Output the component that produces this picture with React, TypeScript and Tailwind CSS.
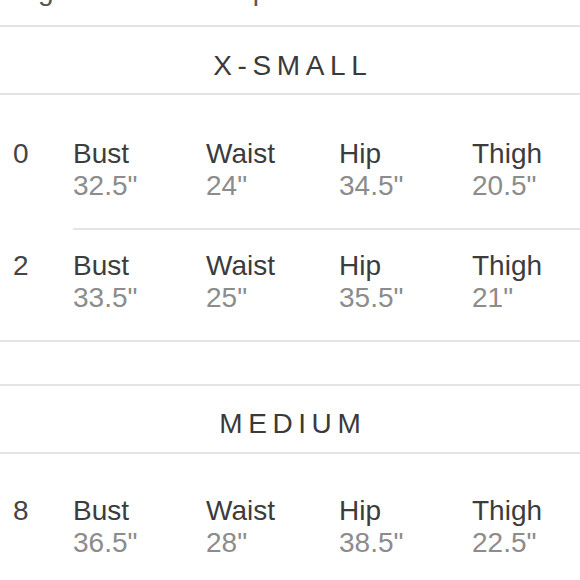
import React from 'react';

interface Measure {
  label: string
  value: string
}

interface SizeRow {
  size: string
  measures: Measure[]
}

const Divider: React.FC<{ indent?: boolean }> = ({ indent = false }) => (
  <div className={indent ? 'pl-[73px]' : ''}>
    <div className="h-[2px] bg-[#e4e4e4]" />
  </div>
);

const SectionTitle: React.FC<{ title: string; className?: string }> = ({ title, className = '' }) => (
  <div className={`text-center text-[28px] leading-[31px] tracking-[0.2em] text-[#3a3a3a] pl-[0.2em] ${className}`}>
    {title}
  </div>
);

const Row: React.FC<{ row: SizeRow; className?: string }> = ({ row, className = '' }) => (
  <div className={`grid grid-cols-[60px_133px_133px_133px_1fr] pl-[13px] text-[28px] leading-[31px] ${className}`}>
    <div className="text-[#444]">{row.size}</div>
    {row.measures.map((m) => (
      <div key={m.label}>
        <div className="text-[#3c3c3c]">{m.label}</div>
        <div className="text-[#8c8c8c] mt-[1px]">{m.value}</div>
      </div>
    ))}
  </div>
);

const rows: Record<string, SizeRow> = {
  '0': {
    size: '0',
    measures: [
      { label: 'Bust', value: '32.5"' },
      { label: 'Waist', value: '24"' },
      { label: 'Hip', value: '34.5"' },
      { label: 'Thigh', value: '20.5"' },
    ],
  },
  '2': {
    size: '2',
    measures: [
      { label: 'Bust', value: '33.5"' },
      { label: 'Waist', value: '25"' },
      { label: 'Hip', value: '35.5"' },
      { label: 'Thigh', value: '21"' },
    ],
  },
  '8': {
    size: '8',
    measures: [
      { label: 'Bust', value: '36.5"' },
      { label: 'Waist', value: '28"' },
      { label: 'Hip', value: '38.5"' },
      { label: 'Thigh', value: '22.5"' },
    ],
  },
};

export default function App() {
  return (
    <div
      className="w-[580px] h-[580px] overflow-hidden bg-white"
      style={{ fontFamily: '"Liberation Sans", Arial, sans-serif' }}
    >
      {/* previous line of the chart, scrolled mostly out of view */}
      <div className="h-[25px] overflow-hidden">
        <div className="mt-[-25px] pl-[13px] text-[28px] leading-[31px] text-[#555] whitespace-nowrap">
          Big size chart for tops
        </div>
      </div>
      <Divider />
      <SectionTitle title="X-SMALL" className="pt-[23px] pb-[12px]" />
      <Divider />
      <Row row={rows['0']} className="pt-[43px] pb-[27px]" />
      <Divider indent />
      <Row row={rows['2']} className="pt-[20px] pb-[27px]" />
      <Divider />
      <div className="h-[42px]" />
      <Divider />
      <SectionTitle title="MEDIUM" className="pt-[22px] pb-[13px]" />
      <Divider />
      <Row row={rows['8']} className="pt-[41px]" />
    </div>
  );
}
